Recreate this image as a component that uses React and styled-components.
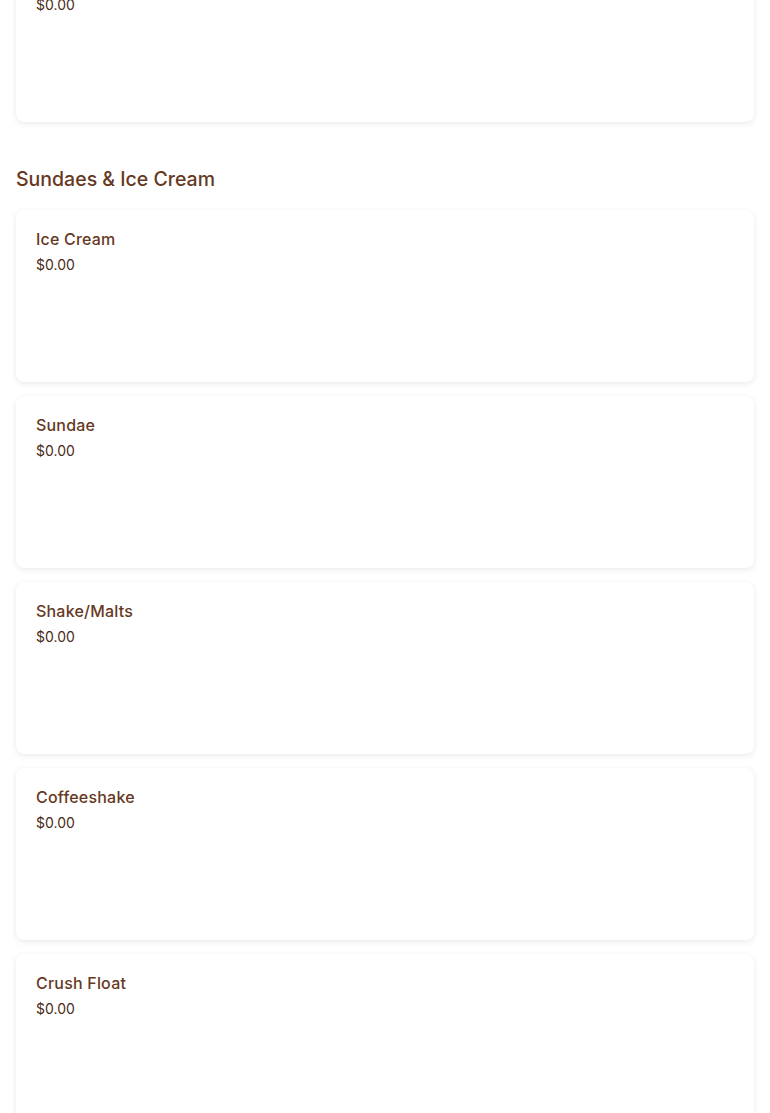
import React from 'react';
import styled, { createGlobalStyle } from 'styled-components';

const colors = {
  brown: '#66391f',
  darkBrown: '#4a2c18',
  white: '#ffffff',
  page: '#ffffff'
};

const GlobalStyle = createGlobalStyle`
  html, body {
    margin: 0;
    padding: 0;
    background: ${colors.page};
    font-family: 'Inter', 'Lato', sans-serif;
    overflow: hidden;
  }
`;

// the list is shown scrolled a little, the first card is cut at the top
const Page = styled.div`
  padding: 0 16px;
  margin-top: -50px;
  display: flex;
  flex-direction: column;
`;

const Section = styled.section`
  display: flex;
  flex-direction: column;
  gap: 14px;
  margin-bottom: 44px;
`;

const SectionTitle = styled.h2`
  margin: 0 0 4px;
  font-size: 19.5px;
  line-height: 26px;
  font-weight: 500;
  color: ${colors.brown};
  letter-spacing: 0;
`;

const Card = styled.div`
  background: ${colors.white};
  border-radius: 8px;
  height: 172px;
  box-sizing: border-box;
  padding: 18px 20px;
  box-shadow: 0 2px 6px rgba(0, 0, 0, 0.08), 0 0 2px rgba(0, 0, 0, 0.04);
`;

const ItemName = styled.div`
  font-size: 16px;
  line-height: 22px;
  font-weight: 500;
  color: ${colors.brown};
  letter-spacing: 0.2px;
`;

const ItemPrice = styled.div`
  margin-top: 6px;
  font-size: 14px;
  line-height: 18px;
  color: ${colors.darkBrown};
`;

const previous = [{ name: 'Cone', price: '$0.00' }];

const sundaes = [
  { name: 'Ice Cream', price: '$0.00' },
  { name: 'Sundae', price: '$0.00' },
  { name: 'Shake/Malts', price: '$0.00' },
  { name: 'Coffeeshake', price: '$0.00' },
  { name: 'Crush Float', price: '$0.00' }
];

function MenuCard({ item }) {
  return (
    <Card>
      <ItemName>{item.name}</ItemName>
      <ItemPrice>{item.price}</ItemPrice>
    </Card>
  );
}

export default function App() {
  return (
    <>
      <GlobalStyle />
      <Page>
        <Section>
          {previous.map((item) => (
            <MenuCard key={item.name} item={item} />
          ))}
        </Section>
        <Section>
          <SectionTitle>Sundaes &amp; Ice Cream</SectionTitle>
          {sundaes.map((item) => (
            <MenuCard key={item.name} item={item} />
          ))}
        </Section>
      </Page>
    </>
  );
}
